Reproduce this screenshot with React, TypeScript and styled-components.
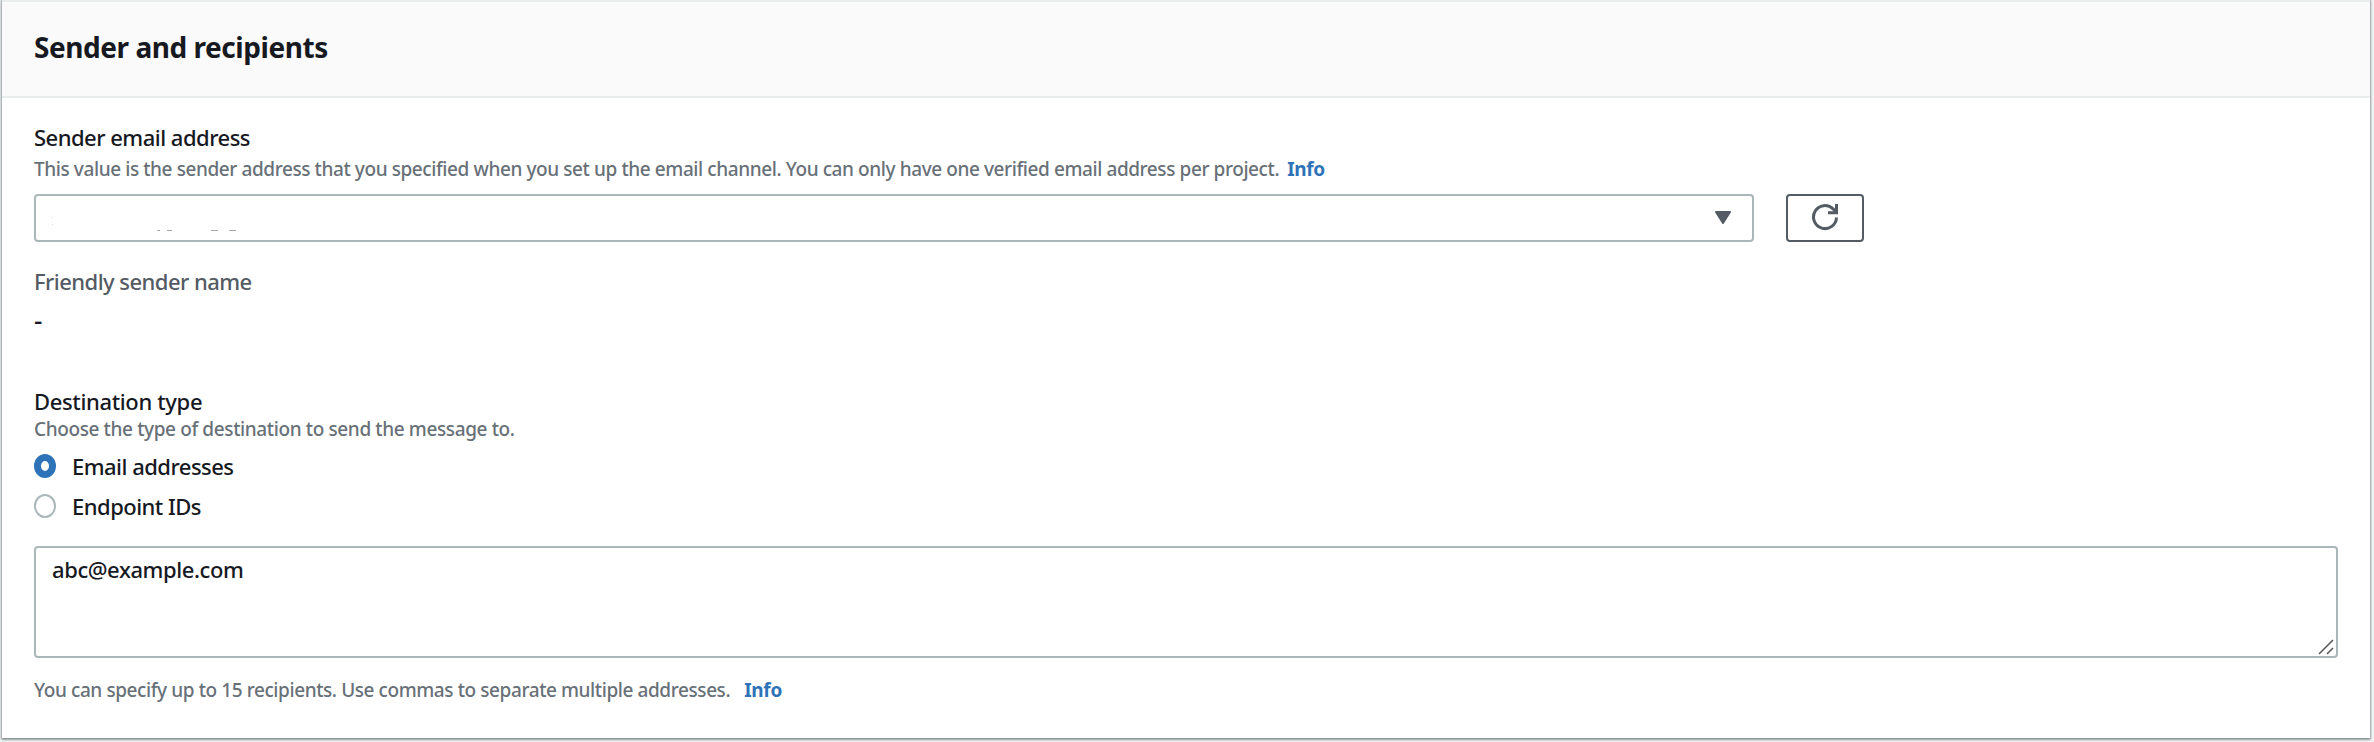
import React from "react";
import styled, { createGlobalStyle } from "styled-components";

const GlobalStyle = createGlobalStyle`
  * { box-sizing: border-box; }
  body {
    margin: 0;
    background: #f2f3f3;
    color: #16191f;
    font-family: "Noto Sans", "Open Sans", sans-serif;
    font-weight: 500;
  }
`;

const Page = styled.main`
  height: 742px;
  padding: 0 4px 4px 2px;
  overflow: hidden;
`;

const Panel = styled.section`
  display: flex;
  flex-direction: column;
  height: 738px;
  background: #fff;
  border-top: 2px solid #eaeded;
  box-shadow: 0 2px 2px 0 rgba(0, 28, 36, 0.3), 0 0 2px 1px rgba(0, 28, 36, 0.3);
`;

const Header = styled.header`
  display: flex;
  align-items: center;
  height: 96px;
  padding: 0 32px 4px;
  background: #fafafa;
  border-bottom: 2px solid #eaeded;
`;

const Title = styled.h2`
  margin: 0;
  font-size: 28px;
  line-height: 40px;
  font-weight: 700;
  letter-spacing: -0.45px;
`;

const Body = styled.div`
  display: flex;
  flex-direction: column;
  padding: 23px 32px 0;
`;

const Label = styled.div<{ $muted?: boolean; $top?: number; $spacing: number }>`
  margin-top: ${(p) => p.$top ?? 0}px;
  font-size: 22px;
  line-height: 32px;
  letter-spacing: ${(p) => p.$spacing}px;
  color: ${(p) => (p.$muted ? "#545b64" : "#16191f")};
`;

const Hint = styled.p<{ $height: number; $gap: number }>`
  display: flex;
  align-items: center;
  gap: ${(p) => p.$gap}px;
  margin: 0;
  height: ${(p) => p.$height}px;
  font-size: 19px;
  white-space: nowrap;
  color: #687078;
`;

const HintText = styled.span<{ $spacing: number }>`
  letter-spacing: ${(p) => p.$spacing}px;
`;

const InfoLink = styled.a`
  color: #2e73b8;
  font-weight: 700;
  letter-spacing: -0.3px;
`;

const SelectRow = styled.div`
  display: flex;
  gap: 32px;
  margin-top: 9px;
`;

const Select = styled.div`
  display: flex;
  align-items: center;
  justify-content: space-between;
  width: 1720px;
  height: 48px;
  padding: 0 20px 0 14px;
  border: 2px solid #aab7b8;
  border-radius: 4px;
`;

const RefreshButton = styled.button`
  display: flex;
  align-items: center;
  justify-content: center;
  width: 78px;
  height: 48px;
  padding: 0 0 2px;
  background: #fff;
  border: 2px solid #545b64;
  border-radius: 4px;
`;

const Value = styled.div`
  height: 40px;
  margin-top: 4px;
  font-size: 26px;
  line-height: 38px;
`;

const RadioGroup = styled.div`
  display: flex;
  flex-direction: column;
  margin-top: 5px;
`;

const RadioRow = styled.label`
  display: flex;
  align-items: center;
  gap: 16px;
  height: 40px;
  font-size: 22px;
  letter-spacing: -0.52px;
`;

const Radio = styled.span<{ $checked?: boolean }>`
  width: 22px;
  height: 24px;
  background: #fff;
  border: ${(p) => (p.$checked ? "7px solid #2e73b8" : "2px solid #aab7b8")};
  border-radius: 50%;
`;

const TextBox = styled.div`
  display: flex;
  justify-content: space-between;
  height: 112px;
  margin-top: 20px;
  padding: 5px 2px 1px 16px;
  font-size: 22px;
  line-height: 32px;
  letter-spacing: -0.42px;
  border: 2px solid #aab7b8;
  border-radius: 4px;
`;

const Grip = styled.svg`
  align-self: flex-end;
`;

export default function App() {
  return (
    <Page>
      <GlobalStyle />
      <Panel>
        <Header>
          <Title>Sender and recipients</Title>
        </Header>
        <Body>
          <Label $spacing={-0.51}>Sender email address</Label>
          <Hint $height={32} $gap={8}>
            <HintText $spacing={-0.41}>
              This value is the sender address that you specified when you set up the email channel. You can only have one verified email address per project.
            </HintText>
            <InfoLink>Info</InfoLink>
          </Hint>
          <SelectRow>
            <Select>
              <svg width="190" height="44" viewBox="0 0 190 44" fill="#a5a8aa">
                <path d="M2 21h1v1h-1zM2 28h1v1h-1z" fill="#d5d7d8" />
                <path d="M107 34h3v1h-3zM117 34h5v1h-5zM161 34h7v1h-7zM179 34h7v1h-7z" />
              </svg>
              <svg width="18" height="16" viewBox="0 0 18 16">
                <path d="M2 2h14L9 13z" fill="#545b64" stroke="#545b64" strokeWidth="2" strokeLinejoin="round" />
              </svg>
            </Select>
            <RefreshButton aria-label="Refresh">
              <svg width="28" height="28" viewBox="0 0 28 28" fill="none" stroke="#545b64" strokeWidth="3">
                <path d="M25.5 14.5a11.5 11.5 0 1 1-3.4-8.6l2.5 2.6" />
                <path d="M25.5 1v8.7H17" />
              </svg>
            </RefreshButton>
          </SelectRow>
          <Label $muted $top={23} $spacing={-0.54}>Friendly sender name</Label>
          <Value>-</Value>
          <Label $top={44} $spacing={-0.35}>Destination type</Label>
          <Hint $height={24} $gap={0}>
            <HintText $spacing={-0.38}>Choose the type of destination to send the message to.</HintText>
          </Hint>
          <RadioGroup>
            <RadioRow><Radio $checked />Email addresses</RadioRow>
            <RadioRow><Radio />Endpoint IDs</RadioRow>
          </RadioGroup>
          <TextBox>
            abc@example.com
            <Grip width="16" height="16" viewBox="0 0 16 16" stroke="#555" strokeWidth="1.5">
              <path d="M1 15L15 1M9 15l6-6" />
            </Grip>
          </TextBox>
          <Hint $height={63} $gap={14}>
            <HintText $spacing={-0.41}>You can specify up to 15 recipients. Use commas to separate multiple addresses.</HintText>
            <InfoLink>Info</InfoLink>
          </Hint>
        </Body>
      </Panel>
    </Page>
  );
}
